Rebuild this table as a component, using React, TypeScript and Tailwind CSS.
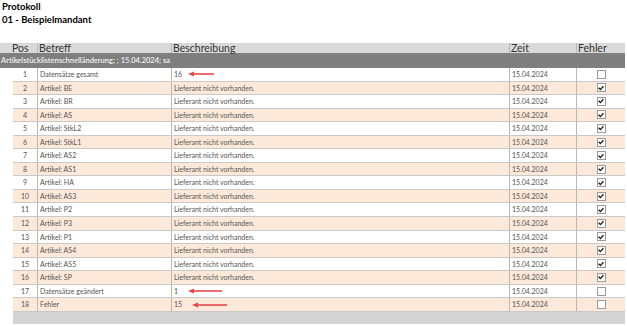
import React from "react";

type Row = {
  pos: number;
  betreff: string;
  beschreibung: string;
  checked: boolean;
  arrow?: { left: number; width: number };
};

const rows: Row[] = [
  { pos: 1, betreff: "Datensätze gesamt", beschreibung: "16", checked: false, arrow: { left: 16, width: 26 } },
  { pos: 2, betreff: "Artikel: BE", beschreibung: "Lieferant nicht vorhanden.", checked: true },
  { pos: 3, betreff: "Artikel: BR", beschreibung: "Lieferant nicht vorhanden.", checked: true },
  { pos: 4, betreff: "Artikel: AS", beschreibung: "Lieferant nicht vorhanden.", checked: true },
  { pos: 5, betreff: "Artikel: StkL2", beschreibung: "Lieferant nicht vorhanden.", checked: true },
  { pos: 6, betreff: "Artikel: StkL1", beschreibung: "Lieferant nicht vorhanden.", checked: true },
  { pos: 7, betreff: "Artikel: AS2", beschreibung: "Lieferant nicht vorhanden.", checked: true },
  { pos: 8, betreff: "Artikel: AS1", beschreibung: "Lieferant nicht vorhanden.", checked: true },
  { pos: 9, betreff: "Artikel: HA", beschreibung: "Lieferant nicht vorhanden.", checked: true },
  { pos: 10, betreff: "Artikel: AS3", beschreibung: "Lieferant nicht vorhanden.", checked: true },
  { pos: 11, betreff: "Artikel: P2", beschreibung: "Lieferant nicht vorhanden.", checked: true },
  { pos: 12, betreff: "Artikel: P3", beschreibung: "Lieferant nicht vorhanden.", checked: true },
  { pos: 13, betreff: "Artikel: P1", beschreibung: "Lieferant nicht vorhanden.", checked: true },
  { pos: 14, betreff: "Artikel: AS4", beschreibung: "Lieferant nicht vorhanden.", checked: true },
  { pos: 15, betreff: "Artikel: AS5", beschreibung: "Lieferant nicht vorhanden.", checked: true },
  { pos: 16, betreff: "Artikel: SP", beschreibung: "Lieferant nicht vorhanden.", checked: true },
  { pos: 17, betreff: "Datensätze geändert", beschreibung: "1", checked: false, arrow: { left: 16, width: 34 } },
  { pos: 18, betreff: "Fehler", beschreibung: "15", checked: false, arrow: { left: 20, width: 35 } },
];

function Arrow({ left, width }: { left: number; width: number }) {
  return (
    <svg
      className="absolute top-1/2 -translate-y-1/2"
      style={{ left, width }}
      height={6}
      viewBox={`0 0 ${width} 6`}
    >
      <line x1={4} y1={3} x2={width} y2={3} stroke="#e8474b" strokeWidth={1.6} />
      <polygon points="0,3 6,0.5 6,5.5" fill="#e8474b" />
    </svg>
  );
}

function Checkbox({ checked }: { checked: boolean }) {
  return (
    <div className="w-[9px] h-[9px] border border-[#9a9a9a] bg-white flex items-center justify-center">
      {checked && (
        <svg width="6" height="6" viewBox="0 0 6 6">
          <path d="M0.6 2.8 L2.4 4.6 L5.4 1.2" stroke="#222" strokeWidth="1.4" fill="none" />
        </svg>
      )}
    </div>
  );
}

export default function App() {
  const font = { fontFamily: "Lato, 'Liberation Sans', sans-serif" };
  return (
    <div className="w-[627px] h-[326px] bg-white overflow-hidden text-[#222]" style={font}>
      <div className="pl-[2px] pt-[0px] font-bold text-[9.5px] leading-[13px] text-black">
        <div>Protokoll</div>
        <div>01 - Beispielmandant</div>
      </div>
      <div className="mt-[17px] w-[625px]">
        {/* header */}
        <div className="flex h-[10px] bg-[#d9d9d9] text-[10.5px] leading-[11px] text-[#333]">
          <div className="w-[38px] border-r border-[#b8b8b8] pl-[12px]">Pos</div>
          <div className="w-[134px] border-r border-[#b8b8b8] pl-[1px]">Betreff</div>
          <div className="w-[338px] border-r border-[#b8b8b8] pl-[1px]">Beschreibung</div>
          <div className="w-[67px] border-r border-[#b8b8b8] pl-[1px]">Zeit</div>
          <div className="flex-1 pl-[1px]">Fehler</div>
        </div>
        {/* group band */}
        <div className="h-[15px] bg-[#7f7f7f] flex items-center pl-[1px] text-[7.5px] font-semibold text-[#f2f2f2]">
          Artikelstücklistenschnelländerung; ; 15.04.2024; sa
        </div>
        {/* rows */}
        <div className="ml-[13px] w-[612px]">
          {rows.map((r) => (
            <div
              key={r.pos}
              className={`flex h-[13.55px] border-b border-[#c9c9c9] text-[7px] text-[#555] ${
                r.pos % 2 === 0 ? "bg-[#fde9d9]" : "bg-white"
              }`}
            >
              <div className="w-[25px] border-r border-[#b8b8b8] flex items-center justify-center">{r.pos}</div>
              <div className="w-[134px] border-r border-[#b8b8b8] flex items-center pl-[2px]">{r.betreff}</div>
              <div className="relative w-[338px] border-r border-[#b8b8b8] flex items-center pl-[2px]">
                {r.beschreibung}
                {r.arrow && <Arrow left={r.arrow.left} width={r.arrow.width} />}
              </div>
              <div className="w-[67px] border-r border-[#b8b8b8] flex items-center pl-[2px]">15.04.2024</div>
              <div className="flex-1 flex items-center justify-center">
                <Checkbox checked={r.checked} />
              </div>
            </div>
          ))}
          <div className="h-[12px] bg-[#d4d4d4]" />
        </div>
      </div>
    </div>
  );
}
